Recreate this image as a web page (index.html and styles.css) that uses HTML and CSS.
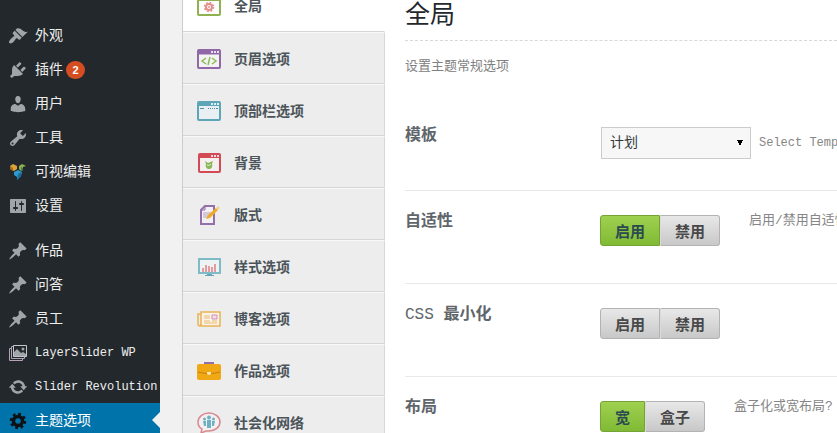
FILE: index.html
```html
<!DOCTYPE html>
<html lang="zh-CN">
<head>
    <meta charset="utf-8">
    <title>主题选项</title>
    <link rel="stylesheet" href="styles.css">
</head>
<body>
    <svg class="sprite" aria-hidden="true">
        <symbol id="pin" viewBox="0 0 20 20">
            <path d="M10.44 3.02l1.82-1.82 6.36 6.35-1.83 1.82c-1.05-.68-2.48-.57-3.41.36l-.75.75c-.92.93-1.04 2.35-.35 3.41l-1.83 1.82-2.41-2.41-2.8 2.79c-.42.42-3.38 2.71-3.8 2.29s1.86-3.39 2.28-3.81l2.79-2.79L4.1 9.36l1.83-1.82c1.05.69 2.48.57 3.4-.36l.75-.75c.93-.92 1.05-2.35.36-3.41z"/>
        </symbol>
    </svg>

    <div class="admin">
        <!-- Admin menu -->
        <nav class="menu">
            <a href="#">
                <svg viewBox="0 0 20 20"><path d="M14.48 11.06L7.41 3.99l1.5-1.5c.5-.56 2.3-.47 3.51.32 1.21.8 1.43 1.28 2.91 2.1 1.18.64 2.45 1.26 4.45.85zm-.71.71L6.7 4.7 4.93 6.47c-.39.39-.39 1.02 0 1.41l1.06 1.06c.39.39.39 1.03 0 1.42-.6.6-1.43 1.11-2.21 1.69-.35.26-.7.53-1.01.84C1.43 14.23.4 16.08 1.4 17.07c.99 1 2.84-.03 4.18-1.36.31-.31.58-.66.85-1.02.57-.78 1.08-1.61 1.69-2.21.39-.39 1.02-.39 1.41 0l1.06 1.06c.39.39 1.02.39 1.41 0z"/></svg>
                <span>外观</span>
            </a>
            <a href="#">
                <svg viewBox="0 0 20 20"><path d="M13.11 4.36L9.87 7.6 8 5.73l3.24-3.24c.35-.34 1.05-.2 1.56.32.52.51.66 1.21.31 1.55zm-8 1.77l.91-1.12 9.01 9.01-1.19.84c-.71.71-2.63 1.16-3.82 1.16H6.14L4.9 17.26c-.59.59-1.54.59-2.12 0-.59-.58-.59-1.53 0-2.12l1.24-1.24v-3.88c0-1.13.4-3.19 1.09-3.89zm7.26 3.97l3.24-3.24c.34-.35 1.04-.21 1.55.31.52.51.66 1.21.31 1.55l-3.24 3.25z"/></svg>
                <span>插件</span>
                <span class="count">2</span>
            </a>
            <a href="#">
                <svg viewBox="0 0 20 20"><path d="M10 9.25c-2.27 0-2.73-3.44-2.73-3.44C7 4.02 7.82 2 9.97 2c2.16 0 2.98 2.02 2.71 3.81 0 0-.41 3.44-2.68 3.44zm0 2.57L12.72 10c2.39 0 4.52 2.33 4.52 4.53v2.49s-3.65 1.13-7.24 1.13c-3.65 0-7.24-1.13-7.24-1.13v-2.49c0-2.25 1.94-4.48 4.47-4.48z"/></svg>
                <span>用户</span>
            </a>
            <a href="#">
                <svg viewBox="0 0 20 20"><path d="M16.68 9.77c-1.34 1.34-3.3 1.67-4.95.99l-5.41 6.52c-.99.99-2.59.99-3.58 0s-.99-2.59 0-3.57l6.52-5.42c-.68-1.65-.35-3.61.99-4.95 1.28-1.28 3.12-1.62 4.72-1.06l-2.89 2.89 2.82 2.82 2.86-2.87c.53 1.58.18 3.39-1.08 4.65zM3.81 16.21c.4.39 1.04.39 1.43 0 .4-.4.4-1.04 0-1.43-.39-.4-1.03-.4-1.43 0-.39.39-.39 1.03 0 1.43z"/></svg>
                <span>工具</span>
            </a>
            <a href="#">
                <svg viewBox="0 0 20 20">
                    <path fill="#d9a43a" d="M2 4l3-2 4 2v3L6 9 2 7z"/>
                    <path fill="#a8691f" d="M2 4l3 2v3L2 7z"/>
                    <path fill="#8fb04f" d="M11 4l3-2 4 2-3 1v3l-2 1-2-2z"/>
                    <path fill="#3f7d4c" d="M13 5l2 1v2l-2 1z"/>
                    <path fill="#2d9bd0" d="M6 10l4-2 4 2-1 4-4 4v-3l-3-2z"/>
                    <path fill="#1c6c9c" d="M10 12l3-2v4l-4 4z"/>
                </svg>
                <span>可视编辑</span>
            </a>
            <a href="#">
                <svg viewBox="0 0 20 20"><path d="M18 16V4c0-.55-.45-1-1-1H3c-.55 0-1 .45-1 1v12c0 .55.45 1 1 1h14c.55 0 1-.45 1-1zM8 11h1c.55 0 1 .45 1 1s-.45 1-1 1H8v1.500c0 .28-.22.5-.5.5s-.5-.22-.5-.5V13H6c-.55 0-1-.45-1-1s.45-1 1-1h1V5.500c0-.28.22-.5.5-.5s.5.22.5.5V11zm5-2h-1c-.55 0-1-.45-1-1s.45-1 1-1h1V5.500c0-.28.22-.5.5-.5s.5.22.5.5V7h1c.55 0 1 .45 1 1s-.45 1-1 1h-1v5.500c0 .28-.22.5-.5.5s-.5-.22-.5-.5V9z"/></svg>
                <span>设置</span>
            </a>
            <a href="#" class="group">
                <svg><use href="#pin"/></svg>
                <span>作品</span>
            </a>
            <a href="#">
                <svg><use href="#pin"/></svg>
                <span>问答</span>
            </a>
            <a href="#">
                <svg><use href="#pin"/></svg>
                <span>员工</span>
            </a>
            <a href="#" class="latin">
                <svg viewBox="0 0 20 20">
                    <g fill="none" stroke="#b3a3b8">
                        <path d="M3.500 5.500h-2v12h13v-2"/>
                        <path d="M5.500 3.500h-2v12h13v-2"/>
                        <path d="M5.500 2.500h13v11h-13z" stroke="#c4c4cc"/>
                    </g>
                    <path d="M6 13V9l3-3 4 4 2-1 3 2v2z"/>
                    <circle cx="15" cy="6" r="1.500"/>
                </svg>
                <span>LayerSlider WP</span>
            </a>
            <a href="#" class="latin">
                <svg viewBox="0 0 20 20"><path d="M10.200 3.280c3.530 0 6.430 2.610 6.920 6h2.080l-3.500 4-3.500-4h2.320c-.45-1.970-2.210-3.450-4.320-3.450-1.450 0-2.730.71-3.540 1.780L4.950 5.660C6.230 4.200 8.110 3.280 10.200 3.280zm-.4 13.440c-3.520 0-6.430-2.610-6.920-6H.8l3.500-4c1.170 1.330 2.330 2.670 3.500 4H5.480c.45 1.970 2.210 3.450 4.320 3.450 1.450 0 2.730-.71 3.540-1.780l1.710 1.950c-1.280 1.460-3.150 2.380-5.250 2.380z"/></svg>
                <span>Slider Revolution</span>
            </a>
            <a href="#" class="current">
                <svg viewBox="0 0 20 20">
                    <circle cx="10" cy="10" r="4.500" fill="none" stroke="#0b1114" stroke-width="3.500"/>
                    <circle cx="10" cy="10" r="7" fill="none" stroke="#0b1114" stroke-width="2.500" stroke-dasharray="2.750 2.750"/>
                </svg>
                <span>主题选项</span>
            </a>
        </nav>

        <!-- Theme option sections -->
        <nav class="sections">
            <a href="#" class="active">
                <svg viewBox="0 0 24 20">
                    <rect x="1" y="1" width="22" height="18" rx="1" fill="#fff" stroke="#8fb14f" stroke-width="2"/>
                    <path d="M1 3h22" stroke="#8fb14f" stroke-width="4"/>
                    <circle cx="12" cy="11" r="3" fill="none" stroke="#e58f8b" stroke-width="2"/>
                    <circle cx="12" cy="11" r="4.500" fill="none" stroke="#e58f8b" stroke-width="1.500" stroke-dasharray="1.770 1.770"/>
                    <circle cx="12" cy="11" r="1" fill="#e58f8b"/>
                </svg>
                <span>全局</span>
            </a>
            <a href="#">
                <svg viewBox="0 0 24 20">
                    <rect x="1" y="1" width="22" height="18" rx="1" fill="#f3f3f3" stroke="#9068a8" stroke-width="2"/>
                    <path d="M1 3h22" stroke="#9068a8" stroke-width="5"/>
                    <path d="M14 3h2m1 0h2m1 0h2" stroke="#eadff0" stroke-width="2"/>
                    <path d="M9 9l-4 3 4 3M15 9l4 3-4 3M13 8l-2 8" fill="none" stroke="#8dbb5c" stroke-width="1.500"/>
                </svg>
                <span>页眉选项</span>
            </a>
            <a href="#">
                <svg viewBox="0 0 24 20">
                    <rect x="1" y="1" width="22" height="18" rx="1" fill="#e9f0f3" stroke="#5fa5b8" stroke-width="2"/>
                    <path d="M1 3h22" stroke="#5fa5b8" stroke-width="4"/>
                    <path d="M14 3h2m1 0h2m1 0h2" stroke="#e0f1f5" stroke-width="2"/>
                    <path d="M3 7.500h4m4 0h1m1 0h1m1 0h1m1 0h1m1 0h2" stroke="#5b8d9d"/>
                </svg>
                <span>顶部栏选项</span>
            </a>
            <a href="#">
                <svg viewBox="0 0 24 20">
                    <rect x="2" y="1" width="21" height="18" rx="1" fill="#f5efef" stroke="#d24a55" stroke-width="2"/>
                    <path d="M2 3h21" stroke="#d24a55" stroke-width="4"/>
                    <path d="M14 3h2m1 0h2m1 0h2" stroke="#f8d7d9" stroke-width="2"/>
                    <path d="M8 8l3 2 5-2-1 3c1 3-1 5-3 5s-4-2-3-5z" fill="#85b957"/>
                    <path d="M10 12c2 1 3 0 4-1" stroke="#f5efef" fill="none"/>
                </svg>
                <span>背景</span>
            </a>
            <a href="#">
                <svg viewBox="0 0 24 22">
                    <path d="M8 2h9v18H4V6z" fill="#f3f0f5" stroke="#9470aa" stroke-width="2"/>
                    <path d="M8 2v4H4" fill="none" stroke="#9470aa"/>
                    <path d="M6 9h8M6 11h7M6 13h6" stroke="#b4a2c0"/>
                    <path d="M9 15l2-4 8-7 2 2-8 8z" fill="#f0ac28"/>
                    <path d="M19 4l2-2 2 2-2 2z" fill="#edd38c"/>
                </svg>
                <span>版式</span>
            </a>
            <a href="#">
                <svg viewBox="0 0 24 20">
                    <rect x="2" y="2" width="21" height="14" fill="#edf2f3" stroke="#7fbac7" stroke-width="2"/>
                    <path d="M5 15v-4h2v4zM8 15V8h2v7zM11 15V9h2v6zM14 15v-5h2v5zM17 15V7h2v8z" fill="#e79a9d"/>
                    <path d="M10 17h5v1h2v1H8v-1h2z" fill="#63a5b6"/>
                </svg>
                <span>样式选项</span>
            </a>
            <a href="#">
                <svg viewBox="0 0 24 20">
                    <path d="M4 3h19v14H4z" fill="#fbf4e6" stroke="#e9b255" stroke-width="1.500"/>
                    <path d="M4 5H1v10c0 3 3 2 3 0" fill="none" stroke="#e9b255" stroke-width="1.500"/>
                    <path d="M7 7h6M7 9h6M7 12h6M7 14h13M15 12h5" stroke="#e9b872"/>
                    <path d="M15 6h5v4h-5z" fill="#f5dcea" stroke="#cf8fb8"/>
                </svg>
                <span>博客选项</span>
            </a>
            <a href="#">
                <svg viewBox="0 0 24 20">
                    <path d="M8 4V2h8v2" fill="none" stroke="#9470aa" stroke-width="2"/>
                    <rect y="3" width="24" height="16" rx="2" fill="#f0a814"/>
                    <path d="M1 11c6 2 16 2 22 0" fill="none" stroke="#c97d0c"/>
                    <path d="M10 11h4v2l-2 1-2-1z" fill="#fbe7b4"/>
                </svg>
                <span>作品选项</span>
            </a>
            <a href="#">
                <svg viewBox="0 0 24 22">
                    <path d="M12 1c6 0 11 4 11 9s-5 9-11 9H9l-5 2 1-4c-2-1-4-4-4-7 0-5 5-9 11-9z" fill="#f5efef" stroke="#d8898f" stroke-width="1.500"/>
                    <circle cx="12" cy="5.500" r="2" fill="#6cb2c4"/>
                    <circle cx="7.500" cy="7" r="1.500" fill="#6cb2c4"/>
                    <circle cx="16.500" cy="7" r="1.500" fill="#6cb2c4"/>
                    <path d="M10 8h4v8h-4zM6 9h3v5H7zM15 9h3l-1 5h-2z" fill="#6cb2c4"/>
                </svg>
                <span>社会化网络</span>
            </a>
        </nav>

        <main class="content">
            <h1>全局</h1>
            <p class="intro">设置主题常规选项</p>

            <div class="option first">
                <label class="name" for="template">模板</label>
                <div class="field field-select">
                    <select id="template">
                        <option>计划</option>
                    </select>
                    <span class="desc">Select Temp</span>
                </div>
            </div>

            <div class="option">
                <span class="name" id="responsive">自适性</span>
                <div class="field">
                    <div class="switch" role="group" aria-labelledby="responsive">
                        <button type="button" class="on">启用</button><button type="button">禁用</button>
                    </div>
                    <span class="desc">启用/禁用自适性</span>
                </div>
            </div>

            <div class="option">
                <span class="name" id="minify"><span class="abbr">CSS</span> 最小化</span>
                <div class="field">
                    <div class="switch" role="group" aria-labelledby="minify">
                        <button type="button">启用</button><button type="button">禁用</button>
                    </div>
                </div>
            </div>

            <div class="option">
                <span class="name" id="layout">布局</span>
                <div class="field">
                    <div class="switch" role="group" aria-labelledby="layout">
                        <button type="button" class="on">宽</button><button type="button">盒子</button>
                    </div>
                    <span class="desc">盒子化或宽布局?</span>
                </div>
            </div>
        </main>
    </div>
</body>
</html>
```

FILE: styles.css
```css
* { box-sizing: border-box; }
body { margin: 0; overflow: hidden; background: #f1f1f1; font-family: "Liberation Mono", "Noto Sans CJK SC", monospace; font-size: 14px; }
a { text-decoration: none; }
.sprite { display: none; }
.admin { display: flex; height: 100vh; overflow: hidden; }

/* admin menu */
.menu { flex: 0 0 160px; padding-top: 18px; background: #23282d; }
.menu a { position: relative; display: flex; align-items: center; height: 34px; padding: 2px 0 0 8px; color: #eee; line-height: 20px; white-space: nowrap; }
.menu svg { flex: none; width: 20px; height: 20px; margin-right: 7px; fill: #a0a5aa; }
.menu .group { margin-top: 11px; }
.menu .latin { font-size: 12px; }
.menu .count { width: 19px; height: 18px; margin-left: 3px; border-radius: 9px; background: #d54e21; color: #fff; font: bold 11px/18px "Liberation Sans", sans-serif; text-align: center; }
.menu .current { background: #0073aa; color: #fff; }
.menu .current::after { content: ""; position: absolute; right: 0; top: 9px; border: 8px solid transparent; border-left-width: 0; border-right-color: #f1f1f1; }

/* section tabs, the page is scrolled a little */
.sections { flex: 0 0 203px; margin: -21px 0 0 22px; border-left: 1px solid #ccc; background: #ededed; }
.sections a { display: flex; align-items: center; height: 52px; padding: 3px 0 0 14px; border-top: 1px solid #f8f8f8; border-right: 1px solid #d8d8d8; border-bottom: 1px solid #d5d5d5; color: #4b5459; font-weight: bold; line-height: 20px; }
.sections svg { width: 24px; height: 22px; margin: 0 13px 2px 0; }
.sections .active { height: 53px; border-top-color: #fff; border-right-color: #fff; background: #fff; }

/* options */
.content { flex: 1; min-width: 0; padding-left: 20px; overflow: hidden; background: #fff; color: #5f666b; }
h1 { height: 41px; margin: 0; padding-top: 3px; border-bottom: 1px dashed #d8d8d8; color: #23282d; font-size: 25px; font-weight: normal; line-height: 28px; }
.intro { margin: 16px 0 28px; color: #808080; font-size: 13px; line-height: 20px; }
.option { display: grid; grid-template-columns: 195px 1fr; min-height: 93px; padding-top: 20px; border-bottom: 1px solid #e8e8e8; }
.option.first { min-height: 86px; }
.name { padding-top: 1px; font-size: 16px; font-weight: bold; line-height: 20px; }
.abbr { font-weight: normal; }
.field { display: flex; align-items: flex-start; min-width: 0; }
.field-select { padding: 2px 0 0 1px; }
.desc { margin-left: 29px; color: #868686; font-size: 13px; line-height: 20px; white-space: nowrap; }
.field-select .desc { margin-left: 8px; font-size: 12px; line-height: 32px; }
select { flex: none; width: 150px; height: 32px; padding: 0 8px; border: 1px solid #ccc; border-radius: 0; background-color: #f7f7f7; color: #32373c; font: 14px "Liberation Mono", "Noto Sans CJK SC", monospace; appearance: none; }
.switch { display: flex; flex: none; margin-top: 4px; }
.switch button { height: 31px; padding: 0 14px; border: 1px solid #b3b3b3; border-radius: 0 3px 3px 0; background: linear-gradient(#e8e8e8, #c8c8c8); color: #484848; font: bold 15px "Liberation Mono", "Noto Sans CJK SC", monospace; }
.switch button:first-child { border-radius: 3px 0 0 3px; }
.switch button + button { border-left-color: #dadada; }
.switch .on { border-color: #75a334; background: linear-gradient(#9fd04f, #80ba35); color: #2b4a50; }

/* select arrow, two triangles side by side */
select {
    background-image: linear-gradient(to bottom left, #000 50%, transparent 50%), linear-gradient(to bottom right, #000 50%, transparent 50%);
    background-position: 135px 12px, 138px 12px;
    background-size: 3px 6px;
    background-repeat: no-repeat;
}
```
